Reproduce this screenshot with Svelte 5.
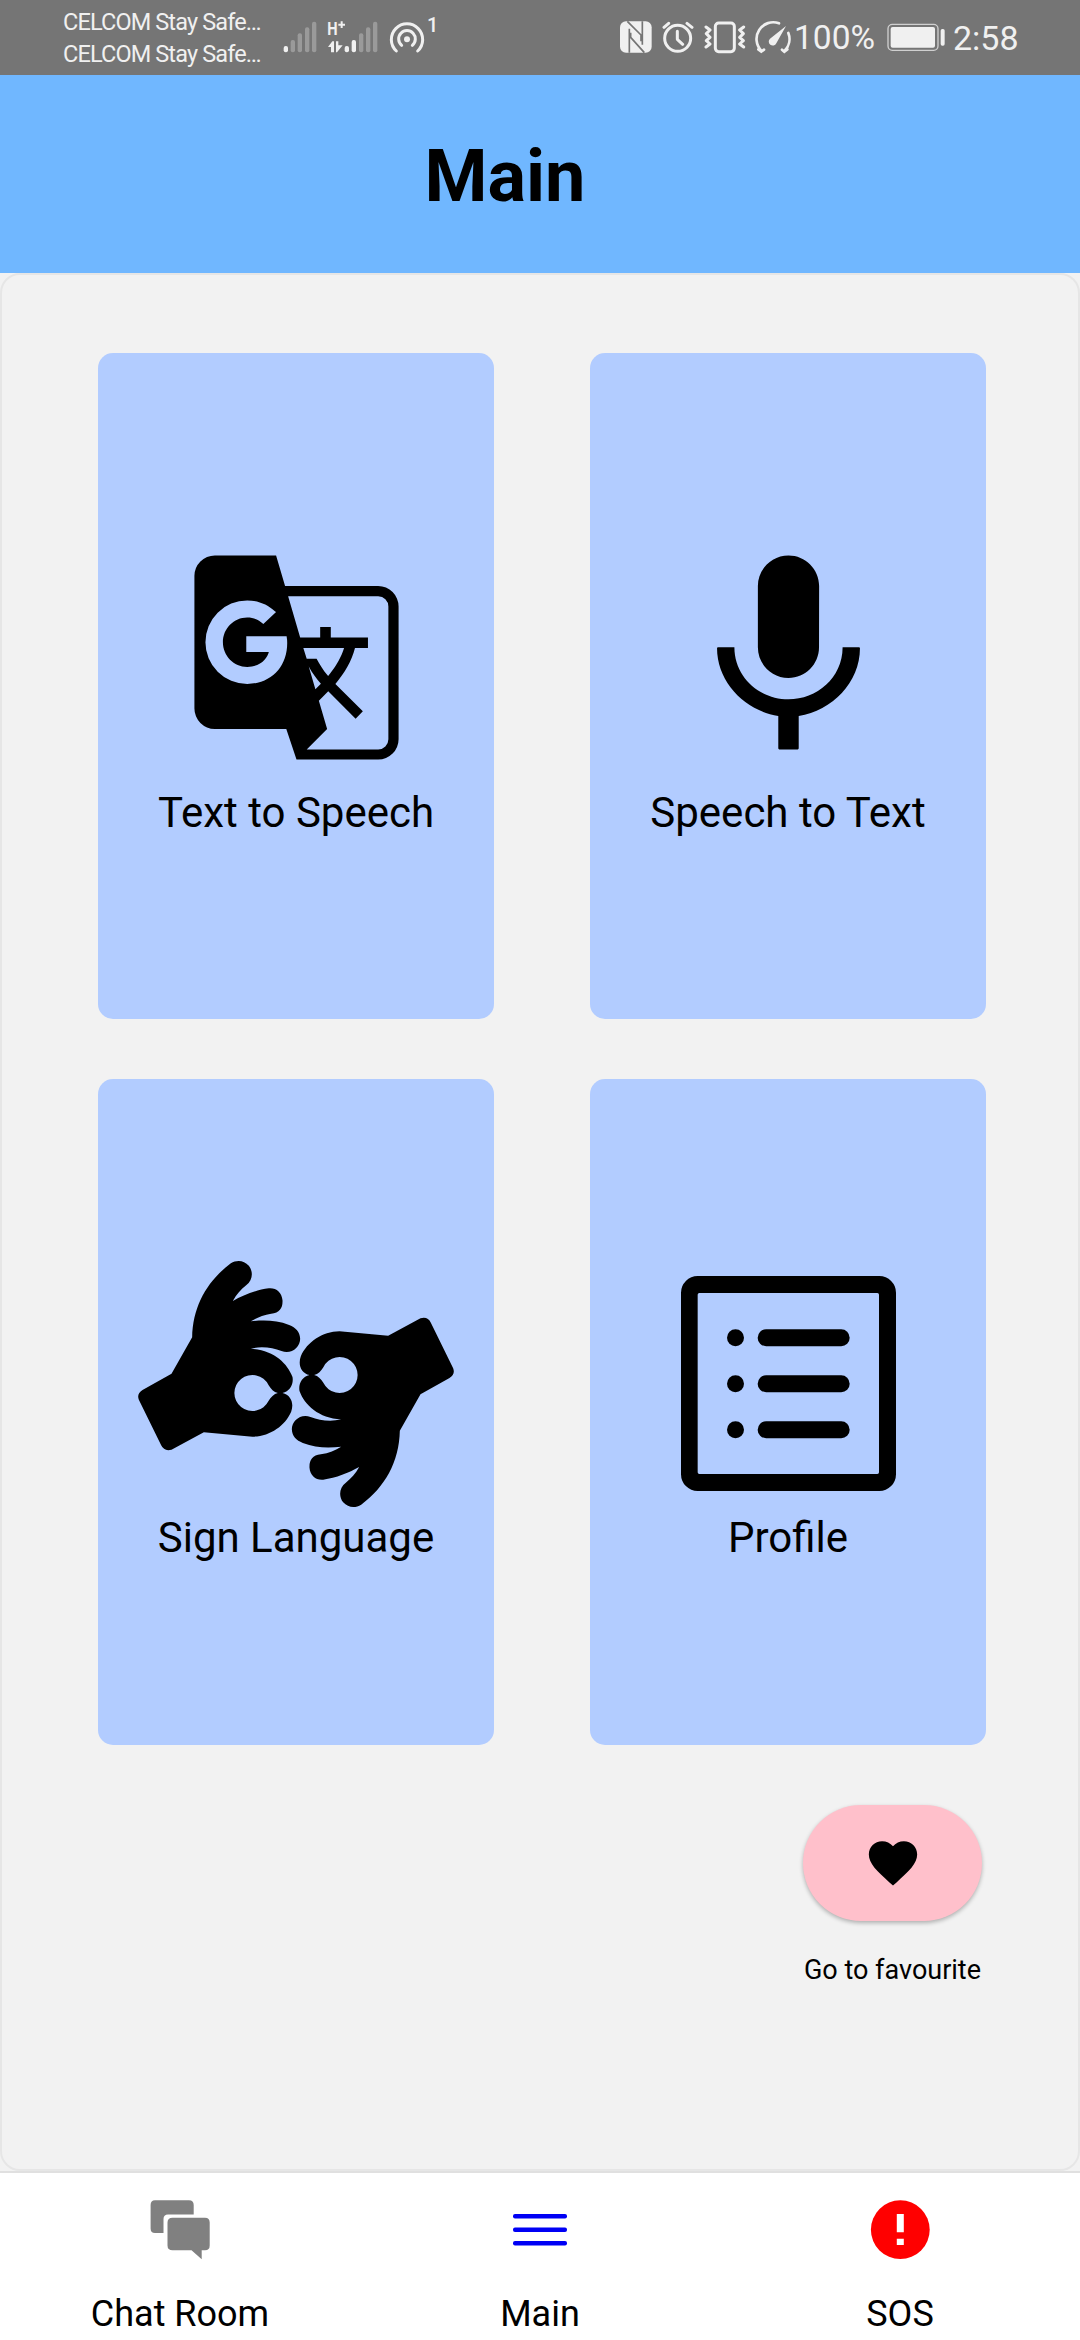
<script>
  const cards = [
    { id: 'translate', label: 'Text to Speech' },
    { id: 'mic', label: 'Speech to Text' },
    { id: 'sign', label: 'Sign Language' },
    { id: 'profile', label: 'Profile' }
  ];
  const tabs = [
    { id: 'chat', label: 'Chat Room' },
    { id: 'menu', label: 'Main' },
    { id: 'sos', label: 'SOS' }
  ];
  const hand =
    'M57 476L124 613Q133 632 155 626L252 574L398 587C450 586 495 555 514 512C523 488 514 462 488 456C510 451 522 430 518 408C503 366 460 326 393 323C425 315 458 320 485 330C515 341 541 318 541 293C540 272 528 260 508 252C470 237 430 237 393 241C410 230 430 222 454 218C480 215 489 200 488 178C486 154 469 140 447 142C408 147 370 163 339 180C350 160 363 146 379 133C399 118 401 92 387 74C372 57 350 56 333 67C262 120 219 195 217 289L155 398L68 447Q50 458 57 476ZM474 456C462 453 453 444 446 432A54 54 0 1 0 446 480C453 468 462 459 474 456Z';
</script>

<div class="screen">
  <div class="status">
    <div class="carriers"><span>CELCOM Stay Safe…</span><span>CELCOM Stay Safe…</span></div>
    <svg class="signal" width="34" height="34" viewBox="729 60 102 102">
      <rect x="731" y="138" width="13" height="19" rx="6" />
      <g opacity=".3">
        <rect x="752" y="120" width="13" height="37" rx="6" />
        <rect x="773" y="100" width="13" height="57" rx="6" />
        <rect x="795" y="82" width="13" height="75" rx="6" />
        <rect x="816" y="65" width="13" height="92" rx="6" />
      </g>
    </svg>
    <svg class="data" width="52" height="34" viewBox="861 60 156 102">
      <text x="862" y="106" font-size="57" font-weight="700" textLength="31" lengthAdjust="spacingAndGlyphs">H</text>
      <path d="M895 74h20M905 64v20" stroke="#f0f0f0" stroke-width="6" />
      <path d="M864 141L877 124H882V157H873V141ZM888 124H895V136H908L891 157H888Z" />
      <rect x="914" y="138" width="13" height="19" rx="6" />
      <rect x="935" y="120" width="13" height="37" rx="6" />
      <g opacity=".3">
        <rect x="957" y="100" width="13" height="57" rx="6" />
        <rect x="978" y="82" width="13" height="75" rx="6" />
        <rect x="999" y="65" width="13" height="92" rx="6" />
      </g>
    </svg>
    <svg class="hotspot" width="36" height="34" viewBox="1046 60 108 102">
      <circle cx="1100" cy="118" r="9" />
      <g fill="none" stroke="#f0f0f0" stroke-width="9" stroke-linecap="round">
        <path d="M1068 153A47 47 0 1 1 1132 153" />
        <path d="M1084 136A25 25 0 1 1 1116 136" />
      </g>
    </svg>
    <span class="count">1</span>
    <div class="right">
      <svg width="32" height="34" viewBox="60 60 96 102">
        <rect x="60" y="64" width="95" height="94" rx="18" />
        <path d="M82 64L123 105V124M92 98V112L133 158M88 86V158M127 64V134" fill="none" stroke="#757575" stroke-width="5" />
      </svg>
      <svg class="alarm" width="32" height="34" viewBox="187 60 96 102">
        <g fill="none" stroke="#f0f0f0" stroke-width="9" stroke-linecap="round" stroke-linejoin="round">
          <circle cx="234" cy="115" r="39" />
          <path d="M233 94V118L249 133M193 82L207 70M262 70L277 82" />
        </g>
      </svg>
      <svg class="vibrate" width="42" height="34" viewBox="312 60 126 102">
        <g fill="none" stroke="#f0f0f0" stroke-width="9" stroke-linejoin="round" stroke-linecap="round">
          <rect x="346" y="69" width="57" height="86" rx="10" />
          <path d="M318 81L330 90L319 101L330 112L319 122L330 132L318 141M431 81L419 90L430 101L419 112L430 122L419 132L431 141" />
        </g>
      </svg>
      <svg class="gauge" width="38" height="34" viewBox="462 60 114 102">
        <g fill="none" stroke="#f0f0f0" stroke-width="8" stroke-linecap="round">
          <path d="M484 152A50 50 0 0 1 537 70M565 99A50 50 0 0 1 554 152M475 148L484 155L492 149M562 148L553 155L546 149" />
        </g>
        <path d="M558 78L529 130A12 12 0 1 1 510 116Z" />
      </svg>
      <span class="percent">100%</span>
      <svg class="battery" width="58" height="34" viewBox="858 60 174 102">
        <rect x="861" y="73" width="150" height="78" rx="13" fill="none" stroke="#d0d0d0" stroke-width="4" />
        <rect x="869" y="81" width="133" height="62" rx="6" />
        <rect x="1019" y="87" width="12" height="50" rx="5" />
      </svg>
      <span class="clock">2:58</span>
    </div>
  </div>

  <header><h1>Main</h1></header>

  <main>
    <section class="panel">
      <div class="grid">
        {#each cards as card (card.id)}
          <button class="card">
            <span class="slot">
              {#if card.id === 'translate'}
                <svg width="245" height="245" viewBox="0 0 24 24"><path d="M20,5H10.88L10,2H4A2,2 0 0,0 2,4V17A2,2 0 0,0 4,19H11L12,22H20A2,2 0 0,0 22,20V7A2,2 0 0,0 20,5M7.17,14.59A4.09,4.09 0 0,1 3.08,10.5A4.09,4.09 0 0,1 7.17,6.41C8.21,6.41 9.16,6.78 9.91,7.5L10,7.54L8.75,8.72L8.69,8.67C8.4,8.4 7.91,8.08 7.17,8.08C5.86,8.08 4.79,9.17 4.79,10.5C4.79,11.83 5.86,12.92 7.17,12.92C8.54,12.92 9.13,12.05 9.29,11.46H7.08V9.91H11.03L11.04,10C11.08,10.19 11.09,10.38 11.09,10.59C11.09,12.94 9.5,14.59 7.17,14.59M13.2,12.88C13.53,13.5 13.94,14.06 14.39,14.58L13.85,15.11L13.2,12.88M13.97,12.12H13L12.67,11.08H16.66C16.66,11.08 16.32,12.39 15.1,13.82C14.58,13.2 14.21,12.59 13.97,12.12M21,20A1,1 0 0,1 20,21H13L15,19L14.19,16.23L15.11,15.31L17.79,18L18.5,17.27L15.81,14.59C16.71,13.56 17.41,12.34 17.73,11.08H19V10.04H15.36V9H14.32V10.04H12.36L11.18,6H20A1,1 0 0,1 21,7V20Z" /></svg>
              {:else if card.id === 'mic'}
                <svg width="245" height="245" viewBox="0 0 24 24"><path d="M12 14c1.66 0 2.99-1.34 2.99-3L15 5c0-1.66-1.34-3-3-3S9 3.34 9 5v6c0 1.66 1.34 3 3 3zm5.3-3c0 3-2.54 5.1-5.3 5.1S6.7 14 6.7 11H5.1q-.1 0-.1.1c0 3.31 2.72 6.13 6 6.62v3.18q0 .1.1.1h1.8q.1 0 .1-.1v-3.18c3.28-.48 6-3.3 6-6.62q0-.1-.1-.1z" /></svg>
              {:else if card.id === 'sign'}
                <svg width="318" height="248" viewBox="51.5 57 954 744">
                  <path d={hand} fill-rule="evenodd" />
                  <path d={hand} fill-rule="evenodd" transform="rotate(180 528.5 429)" />
                </svg>
              {:else}
                <svg width="215" height="215" viewBox="0 0 645 645">
                  <path fill-rule="evenodd" d="M50 0H595A50 50 0 0 1 645 50V595A50 50 0 0 1 595 645H50A50 50 0 0 1 0 595V50A50 50 0 0 1 50 0ZM55 51Q50 51 50 56V589Q50 594 55 594H589Q594 594 594 589V56Q594 51 589 51Z" />
                  {#each [185, 323, 461] as y}
                    <circle cx="163.5" cy={y} r="25.5" />
                    <rect x="230" y={y - 25.5} width="276" height="51" rx="25.5" />
                  {/each}
                </svg>
              {/if}
            </span>
            <span class="label">{card.label}</span>
          </button>
        {/each}
      </div>
      <div class="favourite">
        <button class="pill" aria-label="Go to favourite">
          <svg width="58" height="58" viewBox="0 0 24 24"><path d="M12 21.35l-1.45-1.32C5.4 15.36 2 12.28 2 8.5 2 5.42 4.42 3 7.5 3c1.74 0 3.41.81 4.5 2.09C13.09 3.81 14.76 3 16.5 3 19.58 3 22 5.42 22 8.5c0 3.78-3.4 6.86-8.55 11.54L12 21.35z" /></svg>
        </button>
        <span>Go to favourite</span>
      </div>
    </section>
  </main>

  <nav>
    {#each tabs as tab (tab.id)}
      <button class="tab">
        {#if tab.id === 'chat'}
          <svg width="60" height="60" viewBox="0 0 60 60" fill="#808080">
            <path d="M5 .3H39Q43.7 .3 43.7 5V14.5H18Q13.5 14.5 13.5 19V33H5Q.6 33 .6 28.5V5Q.6 .3 5 .3Z" />
            <path d="M22.5 17.8H55Q59.7 17.8 59.7 22.5V45.5Q59.7 50.3 55 50.3H51.7V59.2L41.5 50.3H22.5Q17.5 50.3 17.5 45.5V22.5Q17.5 17.8 22.5 17.8Z" />
          </svg>
        {:else if tab.id === 'menu'}
          <svg width="60" height="60" viewBox="0 0 60 60" fill="#0000f5">
            <rect x="3" y="14" width="54" height="4.6" rx="2" />
            <rect x="3" y="27.5" width="54" height="4.6" rx="2" />
            <rect x="3" y="41" width="54" height="4.6" rx="2" />
          </svg>
        {:else}
          <svg width="60" height="60" viewBox="0 0 60 60">
            <circle cx="30.3" cy="29.7" r="29.4" fill="#f00" />
            <path d="M26.8 14h7v18.3h-7zM26.8 38.7h7v6.2h-7z" fill="#fff" />
          </svg>
        {/if}
        <span>{tab.label}</span>
      </button>
    {/each}
  </nav>
</div>

<style>
  :global(body) { margin: 0; background: #f2f2f2; }
  .screen {
    width: 1080px;
    height: 2340px;
    display: flex;
    flex-direction: column;
    background: #f2f2f2;
    color: #000;
    font-family: Roboto, sans-serif;
  }
  svg { display: block; flex: none; }
  button { border: 0; padding: 0; margin: 0; color: inherit; font: inherit; background: none; }
  .status {
    height: 75px;
    flex: none;
    display: flex;
    align-items: flex-start;
    padding: 0 63px;
    background: #757575;
    color: #f0f0f0;
    box-sizing: border-box;
  }
  .status svg { fill: #f0f0f0; margin-top: 20px; }
  .carriers {
    width: 220px;
    display: flex;
    flex-direction: column;
    padding-top: 6px;
    font-size: 23.5px;
    line-height: 32px;
    letter-spacing: -0.87px;
    white-space: nowrap;
  }
  .data { margin-left: 10px; }
  .hotspot { margin-left: 10px; }
  .count { margin: 13px 0 0 2px; font-size: 20px; line-height: 24px; font-weight: 500; }
  .right { margin-left: auto; display: flex; }
  .alarm { margin-left: 10px; }
  .vibrate { margin-left: 10px; }
  .gauge { margin-left: 8px; }
  .percent, .clock { flex: none; line-height: 40px; padding-top: 18px; white-space: nowrap; }
  .percent { width: 89px; margin-left: 2px; font-size: 33.5px; }
  .battery { margin-left: 4px; }
  .clock { width: 64px; margin-left: 8px; font-size: 34px; }
  header {
    height: 198px;
    flex: none;
    box-sizing: border-box;
    display: flex;
    justify-content: center;
    padding-right: 70px;
    background: #70b7ff;
  }
  h1 { margin: 0; padding-top: 60px; font-size: 72px; line-height: 84px; font-weight: 700; }
  main { height: 1900px; flex: none; display: flex; box-sizing: border-box; border-bottom: 2px solid #e0e0e0; }
  .panel {
    flex: 1;
    height: 1898px;
    box-sizing: border-box;
    border: 2px solid #e6e6e6;
    border-radius: 20px;
    background: #f2f2f2;
    padding: 78px 92px 0 96px;
  }
  .grid { display: grid; grid-template-columns: 396px 396px; grid-auto-rows: 666px; gap: 60px 96px; }
  .card {
    display: flex;
    flex-direction: column;
    align-items: center;
    padding-top: 182px;
    gap: 8px;
    border-radius: 15px;
    background: #b2ccff;
  }
  .card:nth-child(n + 3) { gap: 7px; }
  .slot { height: 245px; display: flex; align-items: center; justify-content: center; }
  .label { font-size: 42px; line-height: 49px; }
  .favourite {
    width: 179px;
    margin: 60px 4px 0 auto;
    display: flex;
    flex-direction: column;
    gap: 33px;
    font-size: 27px;
    line-height: 32px;
    text-align: center;
    white-space: nowrap;
  }
  .pill {
    height: 116px;
    border-radius: 58px;
    background: #ffc0cb;
    display: flex;
    align-items: center;
    justify-content: center;
    box-shadow: 0 2px 4px rgba(0, 0, 0, 0.28);
  }
  nav { flex: 1; display: grid; grid-template-columns: repeat(3, 1fr); background: #fff; }
  .tab {
    display: flex;
    flex-direction: column;
    align-items: center;
    padding-top: 27px;
    gap: 33px;
    font-size: 36px;
    line-height: 42px;
  }
</style>
